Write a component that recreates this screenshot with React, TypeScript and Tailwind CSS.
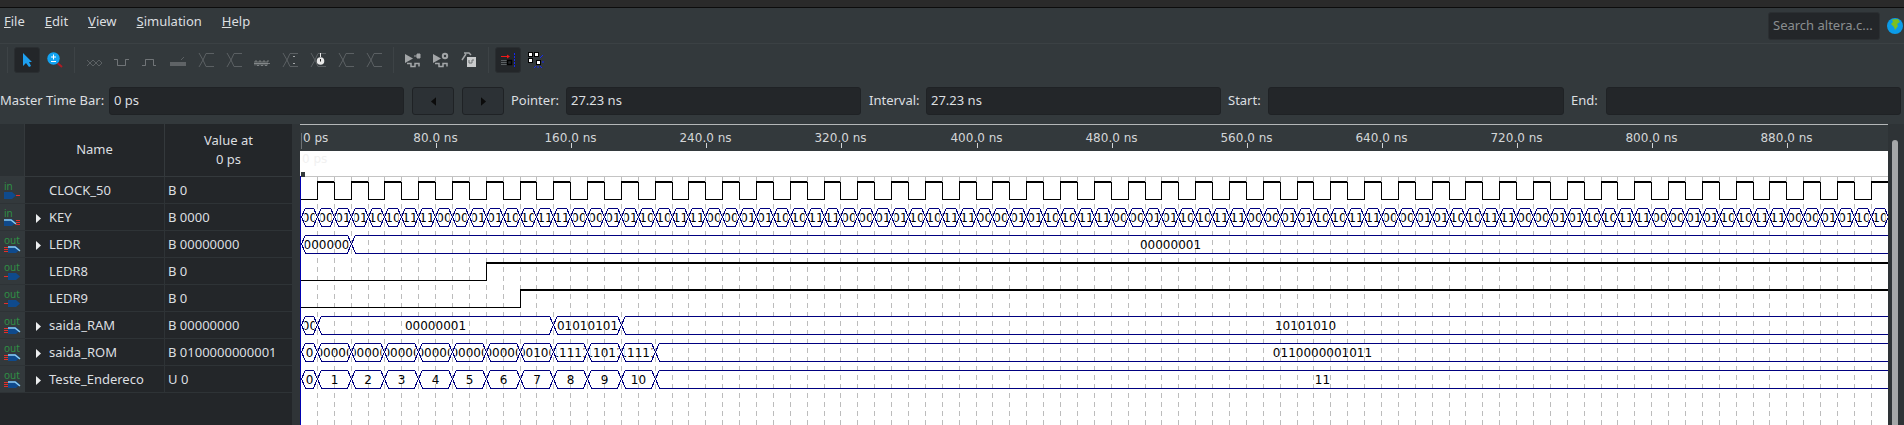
import type { ReactNode } from "react";

// ─── Waveform geometry ────────────────────────────────────────────────────────

const PX_PER_NS = 1.689;
const x = (ns: number) => Math.round(300 + ns * PX_PER_NS) + 0.5;

const NAVY = "#000080";
const DISABLED = "#5b6063";
const ACTIVE = "#a3a6a8";

type Dir = "in" | "out";

const rows: { dir: Dir; bus: boolean; name: string; value: string }[] = [
  { dir: "in", bus: false, name: "CLOCK_50", value: "B 0" },
  { dir: "in", bus: true, name: "KEY", value: "B 0000" },
  { dir: "out", bus: true, name: "LEDR", value: "B 00000000" },
  { dir: "out", bus: false, name: "LEDR8", value: "B 0" },
  { dir: "out", bus: false, name: "LEDR9", value: "B 0" },
  { dir: "out", bus: true, name: "saida_RAM", value: "B 00000000" },
  { dir: "out", bus: true, name: "saida_ROM", value: "B 0100000000001" },
  { dir: "out", bus: true, name: "Teste_Endereco", value: "U 0" },
];

type Segment = [number, number, string];

const keySegments: Segment[] = Array.from({ length: 97 }, (_, i) => [
  i * 10,
  (i + 1) * 10,
  ["00", "01", "10", "11"][Math.floor(i / 2) % 4],
]);

const ledrSegments: Segment[] = [
  [0, 30, "00000000"],
  [30, 1000, "00000001"],
];

const ramSegments: Segment[] = [
  [0, 10, "00000000"],
  [10, 150, "00000001"],
  [150, 190, "01010101"],
  [190, 1000, "10101010"],
];

const romSteps = ["0", "00000", "00000", "00000", "00000", "00000", "00000", "00100", "11111", "11011", "11111"];
const romSegments: Segment[] = [
  ...romSteps.map((label, i): Segment => (i === 0 ? [0, 10, label] : [10 + (i - 1) * 20, 10 + i * 20, label])),
  [210, 1000, "0110000001011"],
];

const counterSegments: Segment[] = [
  ...Array.from({ length: 11 }, (_, i): Segment => (i === 0 ? [0, 10, "0"] : [10 + (i - 1) * 20, 10 + i * 20, String(i)])),
  [210, 1000, "11"],
];

// ─── Waveform ─────────────────────────────────────────────────────────────────

function Bus({ id, top, segments }: { id: string; top: number; segments: Segment[] }) {
  const bottom = top + 18;
  const mid = top + 9;
  return (
    <g>
      {segments.map(([from, to, label], i) => {
        const a = x(from) + (i === 0 ? 1 : 0);
        const b = x(to);
        return (
          <g key={i}>
            <path
              d={`M${a} ${mid} L${a + 4} ${top} H${b - 4} L${b} ${mid} L${b - 4} ${bottom} H${a + 4} Z`}
              fill="none"
              stroke={NAVY}
              shapeRendering="crispEdges"
            />
            <clipPath id={`${id}-${i}`}>
              <rect x={a + 3} y={top} width={Math.max(b - a - 6, 1)} height={18} />
            </clipPath>
            <text
              x={(a + b) / 2}
              y={mid + 4.5}
              textAnchor="middle"
              clipPath={`url(#${id}-${i})`}
              className="fill-black font-['DejaVu_Sans',sans-serif] text-[12px]"
            >
              {label}
            </text>
          </g>
        );
      })}
    </g>
  );
}

function Waveform() {
  const ticks = Array.from({ length: 11 }, (_, i) => (i + 1) * 80);
  const grid = Array.from({ length: 97 }, (_, i) => (i + 1) * 10);
  const clockRises = Array.from({ length: 49 }, (_, i) => 10 + i * 20);

  return (
    <svg viewBox="300 124 1588 301" width={1588} height={301} className="block shrink-0 bg-white">
      {/* Ruler */}
      <rect x={300} y={124} width={1588} height={27} fill="#33393c" />
      <rect x={300} y={124} width={1588} height={1} fill="#b4b7b8" />
      <rect x={301} y={133} width={1} height={16} fill="#6d7275" />
      <text x={303} y={142} className="fill-[#d3d6d8] font-['DejaVu_Sans',sans-serif] text-[12px]">
        0 ps
      </text>
      {ticks.map((ns) => (
        <g key={ns}>
          <rect x={Math.round(x(ns))} y={143} width={1} height={5} fill="#d3d6d8" />
          <text x={x(ns)} y={142} textAnchor="middle" className="fill-[#d3d6d8] font-['DejaVu_Sans',sans-serif] text-[12px]">
            {ns.toFixed(1)} ns
          </text>
        </g>
      ))}

      {/* Master time bar strip */}
      <text x={302} y={163} className="fill-[#f1f1f1] font-['DejaVu_Sans',sans-serif] text-[12px]">
        0 ps
      </text>
      <rect x={300} y={176} width={1588} height={1} fill="#c4c4c4" />

      {/* Grid */}
      {grid.map((ns) => (
        <line key={ns} x1={x(ns)} x2={x(ns)} y1={177} y2={425} stroke="#bcbcbc" strokeDasharray="5 4" shapeRendering="crispEdges" />
      ))}

      {/* CLOCK_50 */}
      <path d={`M300 199.5 H${x(10)}`} stroke="#000" fill="none" shapeRendering="crispEdges" />
      {clockRises.map((ns) => (
        <g key={ns} shapeRendering="crispEdges">
          <rect x={x(ns) - 0.5} y={181} width={x(ns + 10) - x(ns)} height={2} fill="#000" />
          <path d={`M${x(ns)} 182 V199.5 M${x(ns + 10)} 182 V199.5 H${x(ns + 20)}`} stroke="#000" fill="none" />
        </g>
      ))}

      <Bus id="key" top={208} segments={keySegments} />
      <Bus id="ledr" top={235} segments={ledrSegments} />

      {/* LEDR8 / LEDR9 */}
      <g shapeRendering="crispEdges">
        <path d={`M300 280.5 H${x(110)} V263`} stroke="#000" fill="none" />
        <rect x={x(110) - 0.5} y={262} width={1500} height={2} fill="#000" />
        <path d={`M300 307.5 H${x(130)} V290`} stroke="#000" fill="none" />
        <rect x={x(130) - 0.5} y={289} width={1500} height={2} fill="#000" />
      </g>

      <Bus id="ram" top={316} segments={ramSegments} />
      <Bus id="rom" top={343} segments={romSegments} />
      <Bus id="cnt" top={370} segments={counterSegments} />

      {/* Left edge and time bar marker */}
      <rect x={300} y={176} width={1} height={249} fill="#0000b0" />
      <rect x={301} y={172} width={4} height={5} fill="#33393c" />
    </svg>
  );
}

// ─── Toolbar icons ────────────────────────────────────────────────────────────

function Icon({ children }: { children: ReactNode }) {
  return (
    <svg viewBox="0 0 16 16" width={16} height={16} fill="none">
      {children}
    </svg>
  );
}

function BusEdge() {
  return <path d="M1 1 L5 8 L1 15 M5 8 L8 1.5 H16 M5 8 L8 14.5 H16" stroke={DISABLED} />;
}

function PlayWave({ children }: { children: ReactNode }) {
  return (
    <Icon>
      <path d="M0 2 L8 6.5 L0 11 Z" fill={ACTIVE} />
      <path d="M2 11.5 H6 V14.5 H10 V11.5 H14 V14.5" stroke={ACTIVE} strokeWidth={1.5} />
      {children}
    </Icon>
  );
}

const toolIcons: ReactNode[] = [
  <Icon>
    <path d="M1 8 L4 11 L7 8 L10 11 L13 8 L16 11 M1 14 L4 11 L7 14 L10 11 L13 14 L16 11" stroke={DISABLED} />
  </Icon>,
  <Icon>
    <path d="M0 7.5 H3.5 V13.5 H11.5 V7.5 H15" stroke={ACTIVE} opacity={0.55} />
  </Icon>,
  <Icon>
    <path d="M0 13.5 H3.5 V7.5 H11.5 V13.5 H14" stroke={ACTIVE} opacity={0.55} />
  </Icon>,
  <Icon>
    <rect x={0} y={10} width={16} height={4} fill="#5f6366" />
    <path d="M11 8 L14 5" stroke={DISABLED} />
  </Icon>,
  <Icon>
    <BusEdge />
  </Icon>,
  <Icon>
    <BusEdge />
  </Icon>,
  <Icon>
    <path d="M1 13.5 V9 H3 V13.5 H5 V9 H7 V13.5 H9 V9 H11 V13.5 H13 V9 H15 M0 11.5 H16" stroke={ACTIVE} opacity={0.6} />
  </Icon>,
  <Icon>
    <BusEdge />
    <path d="M11 5 L12 4 L13 5 M11 11 L12 12 L13 11" stroke={ACTIVE} />
  </Icon>,
  <Icon>
    <BusEdge />
    <circle cx={10.5} cy={9} r={3.8} fill="#e8e8e8" />
    <path d="M10.5 1 V5" stroke="#e8e8e8" />
    <path d="M10.5 7 V9.5" stroke="#222" />
  </Icon>,
  <Icon>
    <BusEdge />
  </Icon>,
  <Icon>
    <BusEdge />
  </Icon>,
];

// ─── Port icon in the first table column ──────────────────────────────────────

function PortIcon({ dir, bus }: { dir: Dir; bus: boolean }) {
  const shapeX = dir === "in" ? 4 : 8;
  const wireX = dir === "in" ? 16 : 4;
  return (
    <svg viewBox="0 0 25 27" width={25} height={27} className="block">
      <text x={4} y={13} className="fill-[#2f8f45] font-['Noto_Sans',sans-serif] text-[10px]">
        {dir}
      </text>
      <path d={`M${shapeX} 15 H${shapeX + 8} L${shapeX + 12} 18.5 L${shapeX + 8} 22 H${shapeX} Z`} fill="#0f4a8c" />
      {bus ? (
        <>
          <path d={`M${shapeX} 16 H${shapeX + 7} L${shapeX + 12} 20`} stroke="#8fcdf0" strokeWidth={1.5} fill="none" />
          <path d={`M${wireX} 16.5 h4 M${wireX} 18.5 h4 M${wireX} 20.5 h4`} stroke="#e0302c" />
        </>
      ) : (
        <path d={`M${wireX} 18.5 h4`} stroke="#e0302c" />
      )}
    </svg>
  );
}

// ─── Small shared pieces ──────────────────────────────────────────────────────

function Field({ value, width }: { value?: string; width: string }) {
  return (
    <div className={`flex h-[28px] shrink-0 items-center rounded-[3px] border border-[#1f2225] bg-[#232629] pl-[4px] text-[#dcdfe0] ${width}`}>
      {value}
    </div>
  );
}

function Separator() {
  return (
    <div className="flex h-[26px] w-[9px] shrink-0 justify-center">
      <div className="h-full w-px bg-[#3d4346]" />
    </div>
  );
}

function Tool({ children, pressed }: { children: ReactNode; pressed?: boolean }) {
  return (
    <div
      className={`flex h-[26px] w-[26px] shrink-0 items-center justify-center rounded-[3px] ${
        pressed ? "border border-[#2a2e31] bg-[#232629]" : ""
      }`}
    >
      {children}
    </div>
  );
}

function StepButton({ dir }: { dir: "left" | "right" }) {
  return (
    <div className="flex h-[28px] w-[42px] shrink-0 items-center justify-center rounded-[3px] border border-[#1f2225] bg-[#2c3135]">
      <svg viewBox="0 0 6 10" width={5} height={9}>
        <path d={dir === "left" ? "M6 0 V10 L0 5 Z" : "M0 0 V10 L6 5 Z"} fill="#0b0b0b" />
      </svg>
    </div>
  );
}

const menus: [string, string][] = [
  ["F", "ile"],
  ["E", "dit"],
  ["V", "iew"],
  ["S", "imulation"],
  ["H", "elp"],
];

// ─── App ──────────────────────────────────────────────────────────────────────

export default function App() {
  return (
    <div className="flex h-[425px] w-[1904px] flex-col overflow-hidden bg-[#33393c] font-['Noto_Sans',sans-serif] text-[13px] text-[#dcdfe0]">
      {/* Window top edge */}
      <div className="h-[8px] shrink-0 border-b border-[#0c0c0c] bg-[#2a2a2a]" />

      {/* Menu bar */}
      <div className="flex h-[36px] shrink-0 items-center border-b border-[#3b4144] pl-[4px]">
        <div className="flex gap-[20px] pb-[8px]">
          {menus.map(([key, rest]) => (
            <span key={key}>
              <span className="underline">{key}</span>
              {rest}
            </span>
          ))}
        </div>
        <div className="ml-auto mr-[1px] flex items-center gap-[7px]">
          <div className="flex h-[28px] w-[112px] items-center rounded-[3px] border border-[#2b2f32] bg-[#232629] pl-[4px] text-[#8a8e90]">
            Search altera.c...
          </div>
          <svg viewBox="0 0 16 16" width={16} height={16}>
            <circle cx={8} cy={8} r={8} fill="#0b9be8" />
            <path d="M5 1.5 L11 1 L13 4 L10 6 L11 8 L8 12 L7 9 L4 6 L6 4 Z" fill="#7cc021" />
          </svg>
        </div>
      </div>

      {/* Tool bar */}
      <div className="flex h-[43px] shrink-0 items-start gap-[2px] pl-[3px] pt-[3px]">
        <Separator />
        <Tool pressed>
          <Icon>
            <path d="M4 1 V14 L7 11 L10 15 L12 14 L10 10 L13 10 Z" fill="#1ea0f0" />
          </Icon>
        </Tool>
        <Tool>
          <Icon>
            <path d="M10.5 11 L15 15" stroke="#b01c24" strokeWidth={2} />
            <circle cx={6.5} cy={6.5} r={6.2} fill="#12a3f2" />
            <path d="M4 5 H9 M6.5 2.5 V7.5 M4 9.5 H9" stroke="#fff" />
          </Icon>
        </Tool>
        <Separator />
        {toolIcons.map((icon, i) => (
          <Tool key={i}>{icon}</Tool>
        ))}
        <Separator />
        <Tool>
          <PlayWave>
            <path d="M9 4 H12 M12 2 H15 V6 H12 Z" fill={ACTIVE} stroke={ACTIVE} />
          </PlayWave>
        </Tool>
        <Tool>
          <PlayWave>
            <circle cx={12} cy={4} r={3.2} fill={ACTIVE} />
            <circle cx={12} cy={4} r={1.2} fill="#33393c" />
          </PlayWave>
        </Tool>
        <Tool>
          <Icon>
            <path d="M1 8 L5 2 M3 1 H8 L10 3" stroke={ACTIVE} strokeWidth={1.5} />
            <path d="M6 5 H15 V15 H6 Z" fill="#c9cbcc" />
            <path d="M8 8 V11 H11 V8 H13" stroke="#6a6e71" />
          </Icon>
        </Tool>
        <Separator />
        <Tool pressed>
          <Icon>
            <path d="M1 4.5 H9" stroke="#f01818" />
            <path d="M7 2.5 L10 4.5 L7 6.5 Z" fill="#f01818" />
            <path d="M1 8.5 H7 M1 10.5 H7 M1 12.5 H7" stroke="#5b6063" />
            <rect x={7.5} y={8.5} width={4} height={4} fill="none" stroke="#000" strokeWidth={1.5} />
            <path d="M14.5 1 V15" stroke="#1428f0" strokeDasharray="2 1" />
          </Icon>
        </Tool>
        <Tool>
          <Icon>
            <rect x={0.5} y={0.5} width={4} height={4} fill="#fff" stroke="#000" />
            <rect x={6.5} y={0.5} width={4} height={4} fill="#fff" stroke="#000" />
            <rect x={0.5} y={6.5} width={4} height={4} fill="#fff" stroke="#000" />
            <rect x={8.5} y={8.5} width={4} height={4} fill="#fff" stroke="#000" />
            <path d="M12 6 L15 3 M14 10 H16 M12 14 L14 16 M8 14 L6 16 M10 14 V16" stroke="#1428f0" />
          </Icon>
        </Tool>
      </div>

      {/* Time bar */}
      <div className="flex h-[28px] shrink-0 items-center">
        <span className="w-[109px] shrink-0 whitespace-nowrap">Master Time Bar:</span>
        <Field value="0 ps" width="w-[295px]" />
        <div className="ml-[8px] flex gap-[8px]">
          <StepButton dir="left" />
          <StepButton dir="right" />
        </div>
        <span className="ml-[7px] w-[55px] shrink-0">Pointer:</span>
        <Field value="27.23 ns" width="w-[295px]" />
        <span className="ml-[8px] w-[57px] shrink-0">Interval:</span>
        <Field value="27.23 ns" width="w-[295px]" />
        <span className="ml-[7px] w-[40px] shrink-0">Start:</span>
        <Field width="w-[296px]" />
        <span className="ml-[7px] w-[35px] shrink-0">End:</span>
        <Field width="w-[295px]" />
      </div>

      {/* Main panel */}
      <div className="mt-[9px] flex min-h-0 flex-1">
        <div className="w-[292px] shrink-0 bg-[#232629]">
          <div className="flex h-[53px] border-b border-[#34393c]">
            <div className="w-[25px] shrink-0 border-r border-[#34393c] bg-[#2b3033]" />
            <div className="flex w-[140px] shrink-0 items-center justify-center border-r border-[#34393c]">Name</div>
            <div className="flex flex-1 items-center justify-center text-center leading-[19px]">
              Value at
              <br />0 ps
            </div>
          </div>
          {rows.map((row) => (
            <div key={row.name} className="flex h-[27px] border-b border-[#2e3336]">
              <div className="w-[25px] shrink-0 bg-[#33393c]">
                <PortIcon dir={row.dir} bus={row.bus} />
              </div>
              <div className="flex w-[140px] shrink-0 items-center border-r border-[#2e3336] pl-[11px] pt-[2px]">
                <span className="flex w-[13px] shrink-0 items-center">
                  {row.bus ? (
                    <svg viewBox="0 0 5 9" width={5} height={9}>
                      <path d="M0 0 L5 4.5 L0 9 Z" fill="#eceeef" />
                    </svg>
                  ) : null}
                </span>
                {row.name}
              </div>
              <div className="flex flex-1 items-center pl-[3px] pt-[2px]">{row.value}</div>
            </div>
          ))}
        </div>
        <div className="w-[8px] shrink-0 bg-[#2f3437]" />
        <Waveform />
        {/* Scroll bar */}
        <div className="flex w-[16px] shrink-0 bg-[#2e3336] pl-[4px] pt-[16px]">
          <div className="h-full w-[6px] rounded-t-[3px] bg-[#a5a7a8]" />
        </div>
      </div>
    </div>
  );
}
